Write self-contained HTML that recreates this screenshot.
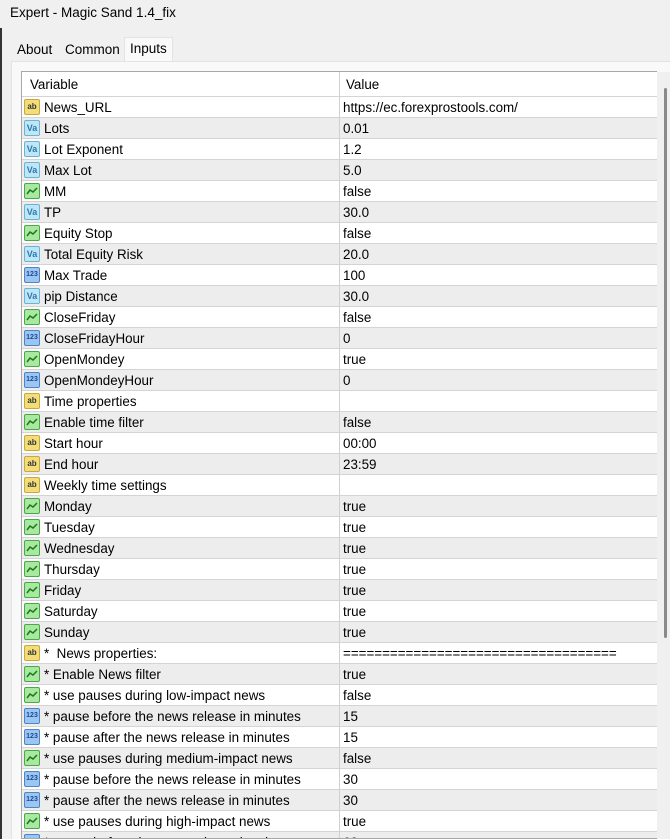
<!DOCTYPE html>
<html><head><style>
*{margin:0;padding:0;box-sizing:border-box}
body{width:670px;height:839px;overflow:hidden;background:#f0f0f0;font-family:"Liberation Sans",Arial,sans-serif;font-size:13px;color:#000;position:relative}
.title{position:absolute;left:10px;top:5px;font-size:13.5px}
.edge{position:absolute;left:0;top:28px;width:2px;height:811px;background:#333}
.tab{position:absolute;top:39px;height:22px;line-height:22px;font-size:13.5px;padding:0 5px}
.panel{position:absolute;left:11px;top:61px;width:659px;height:778px;background:#f9f9f9;border-top:1px solid #e3e3e3;border-left:1px solid #e3e3e3}
.tbl{position:absolute;left:21px;top:71px;width:636px;height:768px;background:#fff;border:1px solid #a8a8a8;border-right:none;overflow:hidden;font-size:13.4px}
.hdr{position:absolute;left:0;top:0;width:636px;height:25px;background:#fff}
.hdr span{position:absolute;top:5px}
.row{position:absolute;left:0;width:636px;height:21px;border-top:1px solid #d4d4d4}
.row.g{background:#ededed}
.row .n{position:absolute;left:22px;top:3px;white-space:pre}
.row .v{position:absolute;left:321px;top:3px;white-space:pre}
.div{position:absolute;left:317px;top:0;width:1px;height:768px;background:#d0d0d0}
.ic{position:absolute;left:2px;top:2px;width:16px;height:16px;border-radius:2px;font-size:8px;line-height:14px;text-align:center;font-weight:bold}
.ab{background:#f3dd7a;border:1px solid #c9a93a;color:#333}
.va{background:#bfe6f5;border:1px solid #6ab3d6;color:#2a7ab0;font-size:9px}
.bo{background:#a9e8a0;border:1px solid #4aa84a}
.in{background:#9cc6ef;border:1px solid #4a86c9;color:#1a4a9a;font-size:7px}
.sb{position:absolute;left:657px;top:72px;width:13px;height:767px;background:#f0f0f0}
.th{position:absolute;left:7px;top:16px;width:3px;height:550px;background:#8a8a8a;border-radius:2px}
</style></head><body>
<div class="title">Expert - Magic Sand 1.4_fix</div>
<div class="edge"></div>
<div class="tab" style="left:12px">About</div>
<div class="tab" style="left:60px">Common</div>
<div class="tab" style="left:124px;top:37px;height:25px;background:#f9f9f9;border:1px solid #e3e3e3;border-bottom:none">Inputs</div>
<div class="panel"></div>
<div class="tbl">
<div class="hdr"><span style="left:8px">Variable</span><span style="left:324px">Value</span></div>
<div id="rows"></div>
<div class="div"></div>
</div>
<div class="sb"><div class="th"></div></div>
<script>
var R=[["ab","News_URL","https://ec.forexprostools.com/"],["va","Lots","0.01"],["va","Lot Exponent","1.2"],["va","Max Lot","5.0"],["bo","MM","false"],["va","TP","30.0"],["bo","Equity Stop","false"],["va","Total Equity Risk","20.0"],["in","Max Trade","100"],["va","pip Distance","30.0"],["bo","CloseFriday","false"],["in","CloseFridayHour","0"],["bo","OpenMondey","true"],["in","OpenMondeyHour","0"],["ab","Time properties",""],["bo","Enable time filter","false"],["ab","Start hour","00:00"],["ab","End hour","23:59"],["ab","Weekly time settings",""],["bo","Monday","true"],["bo","Tuesday","true"],["bo","Wednesday","true"],["bo","Thursday","true"],["bo","Friday","true"],["bo","Saturday","true"],["bo","Sunday","true"],["ab","*  News properties:","==================================="],["bo","* Enable News filter","true"],["bo","* use pauses during low-impact news","false"],["in","* pause before the news release in minutes","15"],["in","* pause after the news release in minutes","15"],["bo","* use pauses during medium-impact news","false"],["in","* pause before the news release in minutes","30"],["in","* pause after the news release in minutes","30"],["bo","* use pauses during high-impact news","true"],["in","* pause before the news release in minutes","60"]];
var L={ab:"ab",va:"Va",bo:"",in:"123"};
var h="";
R.forEach(function(r,i){
var ic=r[0]=="bo"?'<svg width="14" height="14" viewBox="0 0 14 14"><path d="M2 10 L5 6 L8 8 L12 4" stroke="#1a7a1a" stroke-width="1.5" fill="none"/></svg>':L[r[0]];
h+='<div class="row'+(i%2?' g':'')+'" style="top:'+(24+21*i)+'px"><div class="ic '+r[0]+'">'+ic+'</div><span class="n">'+r[1]+'</span><span class="v">'+r[2]+'</span></div>';
});
document.getElementById("rows").innerHTML=h;
</script>
</body></html>
